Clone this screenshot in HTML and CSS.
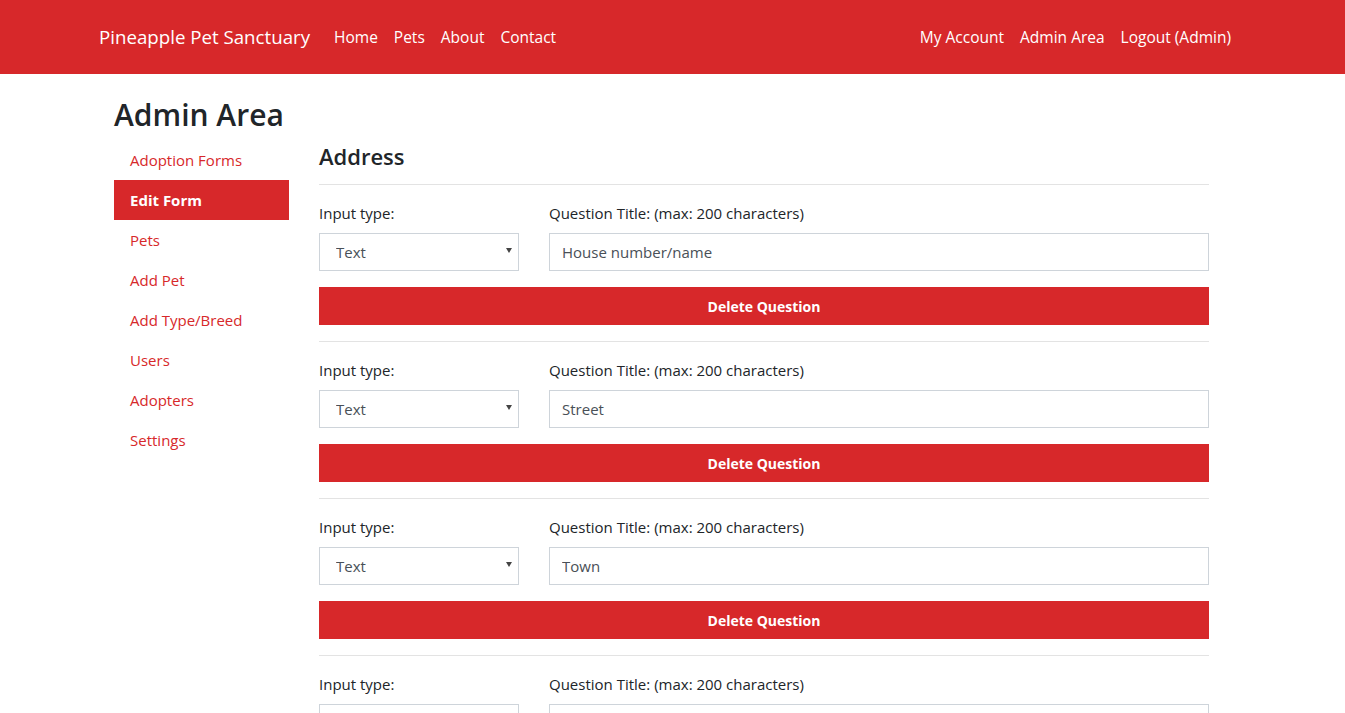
FILE: index.html
```html
<!DOCTYPE html>
<html lang="en">
<head>
<meta charset="utf-8">
<title>Admin Area - Pineapple Pet Sanctuary</title>
<link rel="stylesheet" href="styles.css">
</head>
<body>
<nav class="navbar">
  <div class="nav-inner">
    <a class="brand" href="#">Pineapple Pet Sanctuary</a>
    <ul class="nav-links">
      <li><a href="#">Home</a></li>
      <li><a href="#">Pets</a></li>
      <li><a href="#">About</a></li>
      <li><a href="#">Contact</a></li>
    </ul>
    <ul class="nav-links nav-right">
      <li><a href="#">My Account</a></li>
      <li><a href="#">Admin Area</a></li>
      <li><a href="#">Logout (Admin)</a></li>
    </ul>
  </div>
</nav>
<div class="page">
  <h1 class="page-title">Admin Area</h1>
  <div class="layout">
    <ul class="sidebar">
      <li><a href="#">Adoption Forms</a></li>
      <li><a class="active" href="#">Edit Form</a></li>
      <li><a href="#">Pets</a></li>
      <li><a href="#">Add Pet</a></li>
      <li><a href="#">Add Type/Breed</a></li>
      <li><a href="#">Users</a></li>
      <li><a href="#">Adopters</a></li>
      <li><a href="#">Settings</a></li>
    </ul>
    <main class="main">
      <h3 class="section-title">Address</h3>
      <hr class="divider">
      <div class="question">
        <div class="fields">
          <div class="field-type">
            <label class="label">Input type:</label>
            <div class="select-wrap"><select class="control select"><option>Text</option></select></div>
          </div>
          <div class="field-title">
            <label class="label">Question Title: (max: 200 characters)</label>
            <input class="control input" type="text" value="House number/name">
          </div>
        </div>
        <button class="btn-delete" type="button">Delete Question</button>
      </div>
      <hr class="divider">
      <div class="question">
        <div class="fields">
          <div class="field-type">
            <label class="label">Input type:</label>
            <div class="select-wrap"><select class="control select"><option>Text</option></select></div>
          </div>
          <div class="field-title">
            <label class="label">Question Title: (max: 200 characters)</label>
            <input class="control input" type="text" value="Street">
          </div>
        </div>
        <button class="btn-delete" type="button">Delete Question</button>
      </div>
      <hr class="divider">
      <div class="question">
        <div class="fields">
          <div class="field-type">
            <label class="label">Input type:</label>
            <div class="select-wrap"><select class="control select"><option>Text</option></select></div>
          </div>
          <div class="field-title">
            <label class="label">Question Title: (max: 200 characters)</label>
            <input class="control input" type="text" value="Town">
          </div>
        </div>
        <button class="btn-delete" type="button">Delete Question</button>
      </div>
      <hr class="divider">
      <div class="question">
        <div class="fields">
          <div class="field-type">
            <label class="label">Input type:</label>
            <div class="select-wrap"><select class="control select"><option>Text</option></select></div>
          </div>
          <div class="field-title">
            <label class="label">Question Title: (max: 200 characters)</label>
            <input class="control input" type="text" value="Postcode">
          </div>
        </div>
        <button class="btn-delete" type="button">Delete Question</button>
      </div>
    </main>
  </div>
</div>
</body>
</html>
```
FILE: styles.css
```css
* { box-sizing: border-box; }
html, body { margin: 0; padding: 0; }
body {
  font-family: "Open Sans", "Noto Sans", sans-serif;
  font-size: 15px;
  line-height: 24px;
  color: #212529;
  background: #fff;
}
a { text-decoration: none; }
ul { list-style: none; margin: 0; padding: 0; }

.navbar {
  background: #d7282a;
  height: 74px;
}
.nav-inner {
  height: 74px;
  display: flex;
  align-items: center;
  padding: 0 106px 0 99px;
}
.brand {
  color: #fff;
  font-size: 18.7px;
  line-height: 30px;
  margin-right: 16px;
}
.nav-links { display: flex; }
.nav-links a {
  color: #fff;
  display: block;
  padding: 0 8px;
  line-height: 24px;
  font-size: 15.5px;
}
.nav-right { margin-left: auto; }

.page { padding: 22px 0 40px 114px; }
.page-title {
  margin: 0;
  font-size: 30px;
  line-height: 38px;
  font-weight: 600;
  height: 44px;
}
.layout {
  display: flex;
  gap: 30px;
  align-items: flex-start;
}
.sidebar { width: 175px; flex: none; }
.sidebar a {
  display: block;
  padding: 8px 16px;
  line-height: 24px;
  color: #d7282a;
}
.sidebar a.active {
  background: #d7282a;
  color: #fff;
  font-weight: 700;
}
.main { width: 890px; flex: none; }
.section-title {
  margin: 0;
  font-size: 22px;
  line-height: 32px;
  font-weight: 600;
}
.divider {
  margin: 12px 0 0;
  border: 0;
  border-top: 1px solid #e3e3e3;
  height: 0;
}
.question + .divider { margin-top: 16px; }
.question { padding-top: 16px; }
.fields { display: flex; gap: 30px; }
.field-type { width: 200px; flex: none; }
.field-title { flex: 1; }
.label {
  display: block;
  margin-bottom: 8px;
  line-height: 24px;
}
.control {
  display: block;
  width: 100%;
  height: 38px;
  border: 1px solid #ced4da;
  border-radius: 0;
  background: #fff;
  font-family: inherit;
  font-size: 15px;
  color: #495057;
  margin: 0;
}
.input { padding: 0 12px; }
.select-wrap { position: relative; }
.select {
  appearance: none;
  -webkit-appearance: none;
  padding: 0 24px 0 16px;
}
.select-wrap::after {
  content: "";
  position: absolute;
  right: 7px;
  top: 15px;
  border-left: 3px solid transparent;
  border-right: 3px solid transparent;
  border-top: 5px solid #444;
  pointer-events: none;
}
.btn-delete {
  display: block;
  width: 100%;
  height: 38px;
  margin-top: 16px;
  border: 0;
  background: #d7282a;
  color: #fff;
  font-family: inherit;
  font-size: 14px;
  font-weight: 700;
  cursor: pointer;
}
```
